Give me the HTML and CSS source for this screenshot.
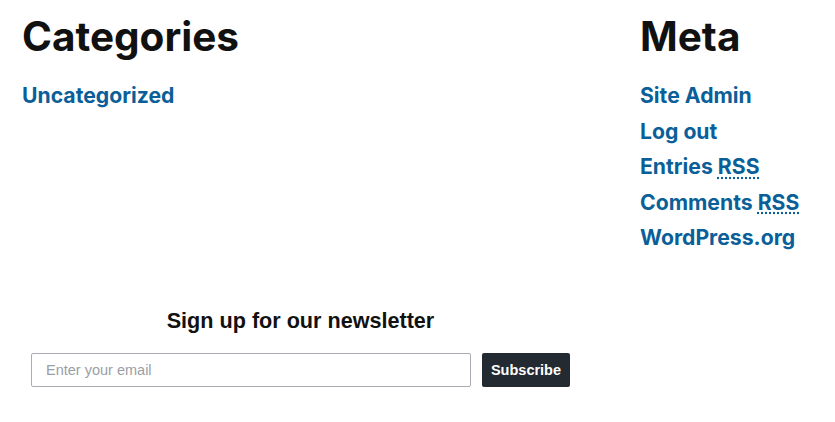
FILE: index.html
```html
<!DOCTYPE html>
<html lang="en">
<head>
<meta charset="utf-8">
<title>Widgets</title>
<link rel="stylesheet" href="styles.css">
</head>
<body>
<div class="widgets">
  <section class="widget widget-categories">
    <h2 class="widget-title">Categories</h2>
    <ul class="widget-list">
      <li><a href="#">Uncategorized</a></li>
    </ul>
  </section>
  <section class="widget widget-meta">
    <h2 class="widget-title">Meta</h2>
    <ul class="widget-list">
      <li><a href="#">Site Admin</a></li>
      <li><a href="#">Log out</a></li>
      <li><a href="#">Entries <abbr title="Really Simple Syndication">RSS</abbr></a></li>
      <li><a href="#">Comments <abbr title="Really Simple Syndication">RSS</abbr></a></li>
      <li><a href="#">WordPress.org</a></li>
    </ul>
  </section>
</div>
<div class="newsletter">
  <h3 class="newsletter-title">Sign up for our newsletter</h3>
  <form class="newsletter-form">
    <input class="newsletter-input" type="email" placeholder="Enter your email">
    <button class="newsletter-button" type="button">Subscribe</button>
  </form>
</div>
</body>
</html>
```
FILE: styles.css
```css
* { box-sizing: border-box; }
body {
  margin: 0;
  background: #fff;
  font-family: Inter, "Noto Sans", sans-serif;
}
.widgets {
  display: flex;
  padding: 12px 0 0 22px;
}
.widget-categories { flex: 1; }
.widget-meta { width: 195px; }
.widget-title {
  margin: 0 0 16px;
  font-size: 40.5px;
  font-weight: 700;
  line-height: 50px;
  color: #111;
}
.widget-list {
  list-style: none;
  margin: 0;
  padding: 0;
}
.widget-list li {
  font-size: 21.2px;
  font-weight: 700;
  line-height: 35.5px;
}
.widget-list a {
  color: #0b5f99;
  text-decoration: none;
}
.widget-list abbr {
  text-decoration: underline dotted;
  text-underline-offset: 3px;
}
.newsletter {
  width: 539px;
  margin: 52px 0 0 31px;
  font-family: "Liberation Sans", Arial, sans-serif;
}
.newsletter-title {
  margin: 0 0 19px;
  text-align: center;
  font-size: 21.6px;
  font-weight: 700;
  color: #111;
}
.newsletter-form {
  display: flex;
  gap: 11px;
}
.newsletter-input {
  flex: 1;
  height: 34px;
  padding: 0 14px;
  border: 1px solid #a9adb3;
  border-radius: 2px;
  font-family: "Liberation Sans", Arial, sans-serif;
  font-size: 14.5px;
  color: #333;
}
.newsletter-input::placeholder { color: #9aa0a6; }
.newsletter-button {
  width: 88px;
  height: 34px;
  border: 0;
  border-radius: 2px;
  background: #232a31;
  color: #fff;
  font-family: "Liberation Sans", Arial, sans-serif;
  font-size: 14.5px;
  font-weight: 700;
}
```
